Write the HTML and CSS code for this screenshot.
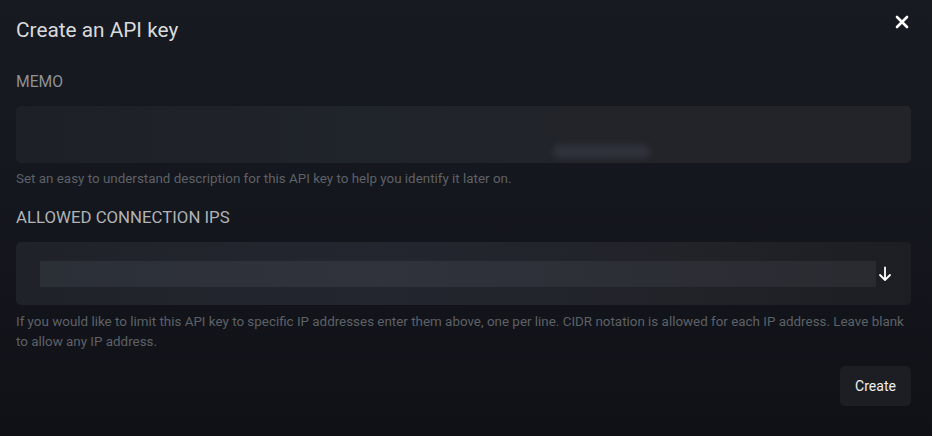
FILE: index.html
```html
<!DOCTYPE html>
<html>
<head>
<meta charset="utf-8">
<link rel="stylesheet" href="styles.css">
</head>
<body>
<div class="modal">
  <div class="header">
    <h1 class="title">Create an API key</h1>
    <button class="close" aria-label="Close">
      <svg width="14" height="14" viewBox="0 0 14 14"><path d="M2 2 L12 12 M12 2 L2 12" stroke="#ffffff" stroke-width="2.6" stroke-linecap="round"/></svg>
    </button>
  </div>

  <div class="field memo-field">
    <label class="label label-memo">MEMO</label>
    <div class="input memo-input"><span class="ghost"></span></div>
    <p class="help">Set an easy to understand description for this API key to help you identify it later on.</p>
  </div>

  <div class="field ip-field">
    <label class="label label-ip">ALLOWED CONNECTION IPS</label>
    <div class="input ip-input">
      <div class="ip-bar"></div>
      <svg class="arrow" width="14" height="16" viewBox="0 0 14 16"><path d="M7 1.5 V14 M2 9 L7 14 L12 9" stroke="#ffffff" stroke-width="1.8" fill="none" stroke-linecap="round" stroke-linejoin="round"/></svg>
    </div>
    <p class="help help-ip">If you would like to limit this API key to specific IP addresses enter them above, one per line. CIDR notation is allowed for each IP address. Leave blank to allow any IP address.</p>
  </div>

  <div class="footer">
    <button class="create">Create</button>
  </div>
</div>
</body>
</html>
```

FILE: styles.css
```css
* { box-sizing: border-box; }
html, body {
  margin: 0;
  height: 100%;
}
body {
  background: linear-gradient(180deg, #171a20 0%, #14171d 45%, #0f1117 100%);
  font-family: Roboto, "Liberation Sans", sans-serif;
  color: #d6d7d9;
}
.modal {
  width: 932px;
  height: 436px;
  padding: 18px 23px 0 16px;
  display: flex;
  flex-direction: column;
}
.header {
  display: flex;
  justify-content: space-between;
  align-items: flex-start;
  height: 24px;
}
.title {
  margin: 0;
  font-size: 20.8px;
  line-height: 24px;
  font-weight: 400;
  color: #d9dadc;
}
.close {
  background: none;
  border: 0;
  padding: 0;
  margin-top: -3px;
  width: 14px;
  height: 14px;
  cursor: pointer;
  display: flex;
}
.field {
  display: flex;
  flex-direction: column;
  width: 895px;
}
.memo-field { margin-top: 31px; }
.ip-field { margin-top: 19px; }
.label {
  line-height: 18px;
}
.label-memo {
  color: #8e9195;
  font-size: 15.7px;
}
.label-ip {
  color: #b1b3b7;
  font-size: 16.8px;
}
.input {
  background: #212329;
  border-radius: 5px;
  width: 895px;
}
.memo-input {
  margin-top: 15px;
  height: 57px;
  position: relative;
  background: linear-gradient(90deg, #1d2026 0%, #20242b 40%, #222429 70%, #232429 100%);
}
.ghost {
  position: absolute;
  left: 537px;
  top: 39px;
  width: 97px;
  height: 13px;
  border-radius: 6px;
  background: #30333b;
  filter: blur(3px);
}
.help {
  margin: 6px 0 0;
  font-size: 13.4px;
  line-height: 20px;
  color: #5e6167;
}
.ip-input {
  margin-top: 16px;
  height: 63px;
  padding: 19px 18px 0 24px;
  display: flex;
  align-items: flex-start;
  background: linear-gradient(90deg, #1f2329 0%, #23262e 40%, #212329 75%, #1d1e23 100%);
}
.ip-bar {
  width: 836px;
  height: 26px;
  background: linear-gradient(90deg, #2b2f36 0%, #30333c 40%, #2c2e35 75%, #2a2b31 100%);
}
.arrow {
  margin: 5px 0 0 2px;
}
.help-ip {
  margin-top: 7px;
}
.footer {
  display: flex;
  justify-content: flex-end;
  width: 895px;
  margin-top: 14px;
}
.create {
  width: 71px;
  height: 40px;
  border: 0;
  border-radius: 5px;
  background: #1d1e23;
  color: #f0f0f0;
  font-family: Roboto, "Liberation Sans", sans-serif;
  font-size: 14px;
  cursor: pointer;
}
```
